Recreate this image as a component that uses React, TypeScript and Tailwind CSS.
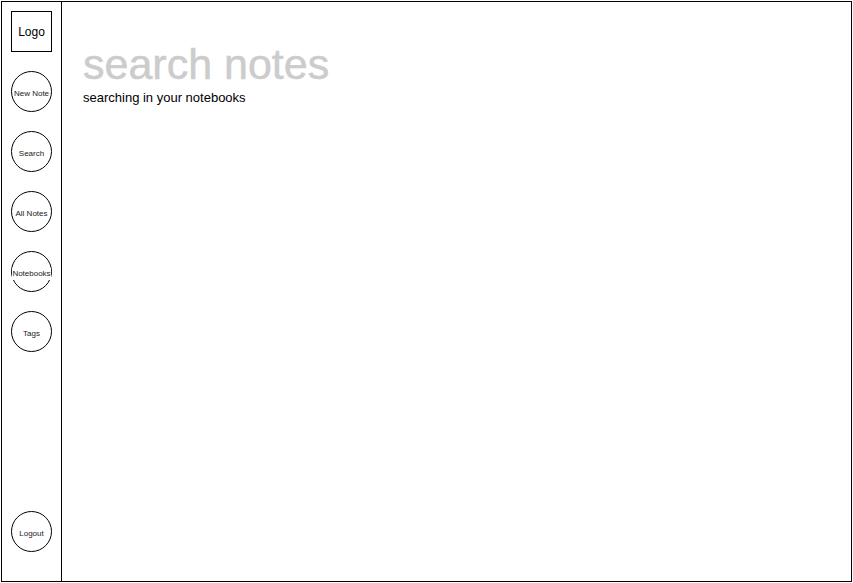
export default function App() {
  const items = ["New Note", "Search", "All Notes", "Notebooks", "Tags"];
  return (
    <div className="m-px flex h-[581px] w-[851px] border border-black bg-white text-black font-['Liberation_Sans',Arial,sans-serif]">
      <aside className="flex h-full w-[60px] shrink-0 flex-col items-start border-r border-black pb-[29px] pl-[9px] pt-[9px]">
        <div className="flex h-[41px] w-[41px] items-center justify-center border border-black text-[12px]">Logo</div>
        <nav className="mt-[19px] flex flex-col gap-[19px]">
          {items.map((label) => (
            <div key={label} className="flex h-[41px] w-[41px] items-center justify-center whitespace-nowrap rounded-full border border-black pt-[4px] text-[8px] text-[#222222]">
              <span className={label === "Notebooks" ? "bg-white" : ""}>{label}</span>
            </div>
          ))}
        </nav>
        <div className="mt-auto flex h-[41px] w-[41px] items-center justify-center rounded-full border border-black pt-[4px] text-[8px] text-[#222222]">Logout</div>
      </aside>
      <main className="flex-1 pl-[21px] pt-[38px]">
        <h1 className="text-[43px] leading-[48px] text-[#cccccc] [-webkit-text-stroke:0.5px_#cccccc]">search notes</h1>
        <p className="mt-[1px] text-[13px] leading-[18px]">searching in your notebooks</p>
      </main>
    </div>
  );
}
